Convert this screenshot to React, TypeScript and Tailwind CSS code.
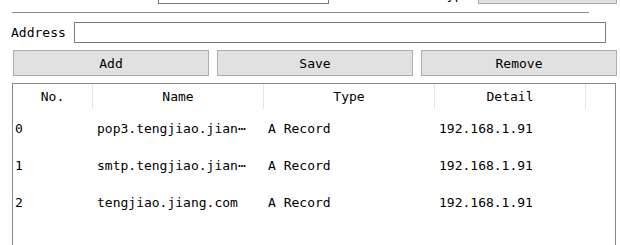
const rows = [
  { no: "0", name: "pop3.tengjiao.jian⋯", type: "A Record", detail: "192.168.1.91" },
  { no: "1", name: "smtp.tengjiao.jian⋯", type: "A Record", detail: "192.168.1.91" },
  { no: "2", name: "tengjiao.jiang.com", type: "A Record", detail: "192.168.1.91" },
];

const mono = "font-['DejaVu_Sans_Mono','Liberation_Mono',monospace]";

export default function App() {
  return (
    <div className={`w-[621px] h-[245px] overflow-hidden bg-white text-[13px] text-black ${mono}`}>
      {/* top row, scrolled mostly out of view */}
      <div className="-mt-[21px] h-[25px] flex items-end">
        <div className="ml-[158px] w-[171px] h-[21px] border border-[#7a7a7a] bg-white" />
        <span className="ml-[110px] leading-[20px] -mb-[1px]">Type</span>
        <div className="ml-[8px] w-[139px] h-[26px] border border-[#adadad] bg-[#e1e1e1]" />
      </div>

      <div className="mt-[8px] ml-[12px] w-[577px] border-t border-[#8c8c8c]" />

      <div className="mt-[9px] flex items-center pl-[11px]">
        <span className="w-[63px]">Address</span>
        <div className="w-[532px] h-[21px] border border-[#7a7a7a] bg-white" />
      </div>

      <div className="mt-[7px] ml-[13px] flex gap-[8px]">
        {["Add", "Save", "Remove"].map((label) => (
          <button
            key={label}
            className="w-[196px] h-[26px] pt-[2px] border border-[#adadad] bg-[#e1e1e1] flex items-center justify-center"
          >
            {label}
          </button>
        ))}
      </div>

      <div className="mt-[7px] ml-[12px] w-[604px] h-[200px] border border-[#828790] bg-white">
        <div className="flex h-[26px]">
          <div className="w-[80px] h-[25px] flex items-center justify-center border-r border-[#e5e5e5]">No.</div>
          <div className="w-[171px] h-[25px] flex items-center justify-center border-r border-[#e5e5e5]">Name</div>
          <div className="w-[171px] h-[25px] flex items-center justify-center border-r border-[#e5e5e5]">Type</div>
          <div className="w-[151px] h-[25px] flex items-center justify-center border-r border-[#e5e5e5]">Detail</div>
        </div>
        {rows.map((r) => (
          <div key={r.no} className="flex h-[37px] items-center whitespace-nowrap">
            <div className="w-[81px] pl-[2px]">{r.no}</div>
            <div className="w-[171px] pl-[3px] overflow-hidden">{r.name}</div>
            <div className="w-[171px] pl-[3px]">{r.type}</div>
            <div className="w-[151px] pl-[3px]">{r.detail}</div>
          </div>
        ))}
      </div>
    </div>
  );
}
